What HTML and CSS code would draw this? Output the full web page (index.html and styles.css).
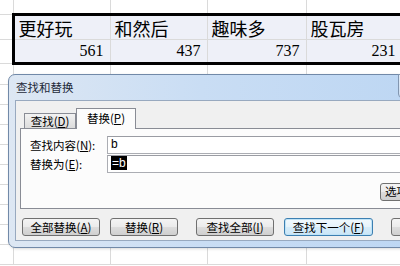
FILE: index.html
```html
<!DOCTYPE html>
<html lang="zh-CN">
<head>
<meta charset="UTF-8">
<title>查找和替换</title>
<link rel="stylesheet" href="styles.css">
</head>
<body>

<table class="sheet">
  <colgroup>
    <col class="c0"><col class="c1"><col class="c2"><col class="c3"><col class="c4">
  </colgroup>
  <tr class="r-top"><td></td><td></td><td></td><td></td><td></td></tr>
  <tr class="r-head">
    <td></td>
    <td class="hd first">更好玩</td>
    <td class="hd">和然后</td>
    <td class="hd">趣味多</td>
    <td class="hd">股瓦房</td>
  </tr>
  <tr class="r-num">
    <td></td>
    <td class="num first">561</td>
    <td class="num">437</td>
    <td class="num">737</td>
    <td class="num">231</td>
  </tr>
  <tr><td></td><td></td><td></td><td></td><td></td></tr>
  <tr><td></td><td></td><td></td><td></td><td></td></tr>
  <tr><td></td><td></td><td></td><td></td><td></td></tr>
  <tr><td></td><td></td><td></td><td></td><td></td></tr>
  <tr><td></td><td></td><td></td><td></td><td></td></tr>
  <tr><td></td><td></td><td></td><td></td><td></td></tr>
  <tr><td></td><td></td><td></td><td></td><td></td></tr>
  <tr><td></td><td></td><td></td><td></td><td></td></tr>
  <tr><td></td><td></td><td></td><td></td><td></td></tr>
  <tr><td></td><td></td><td></td><td></td><td></td></tr>
</table>

<div class="dialog">
  <div class="titlebar">查找和替换<span class="help"></span></div>
  <div class="client">
    <div class="tabs">
      <div class="tab">查找(<u>D</u>)</div>
      <div class="tab active">替换(<u>P</u>)</div>
    </div>
    <div class="panel">
      <div class="field">
        <label>查找内容(<u>N</u>):</label>
        <div class="input">b</div>
      </div>
      <div class="field">
        <label>替换为(<u>E</u>):</label>
        <div class="input"><span class="sel">=b</span></div>
      </div>
      <div class="options">
        <button class="btn">选项(<u>T</u>) &gt;&gt;</button>
      </div>
    </div>
    <div class="actions">
      <button class="btn w78">全部替换(<u>A</u>)</button>
      <button class="btn w68">替换(<u>R</u>)</button>
      <button class="btn w78 wide-gap">查找全部(<u>I</u>)</button>
      <button class="btn w89 focus">查找下一个(<u>F</u>)</button>
      <button class="btn w78 wide-gap">关闭</button>
    </div>
  </div>
</div>

</body>
</html>
```

FILE: styles.css
```css
html, body {
  margin: 0;
  width: 400px;
  height: 266px;
  overflow: hidden;
  background: #fff;
}
body {
  position: relative;
  font-family: "Noto Sans CJK SC", sans-serif;
  color: #000;
}

/* worksheet */
.sheet {
  border-collapse: collapse;
  table-layout: fixed;
  width: 402px;
}
.c0 { width: 13px; }
.c1 { width: 97px; }
.c2 { width: 97px; }
.c3 { width: 99px; }
.c4 { width: 96px; }
.sheet td {
  border: 1px solid #dadada;
  padding: 0 7px;
  height: 19px;
  white-space: nowrap;
  overflow: hidden;
}
.sheet tr:first-child td {
  border-top: none;
}
.sheet td:first-child {
  border-left: none;
}
.sheet .r-top td {
  height: 13px;
}
.sheet .hd {
  height: 23px;
  border-top: 3px solid #000;
  background: #eef0f8;
  font-size: 18px;
  line-height: 22px;
  padding-left: 4px;
}
.sheet .num {
  height: 22px;
  border-bottom: 3px solid #000;
  background: #eef0f8;
  font-family: "Liberation Serif", serif;
  font-size: 16px;
  text-align: right;
  padding-right: 6px;
}
.sheet .first {
  border-left: 3px solid #000;
}

/* dialog */
.dialog {
  position: absolute;
  left: 8px;
  top: 74px;
  width: 430px;
  height: 174px;
  box-sizing: border-box;
  border: 1px solid #7189a8;
  border-radius: 7px 0 0 7px;
  padding: 0 0 6px 6px;
  background: linear-gradient(to right, #dde7f3, #c9ddf4 45%, #bcd6f3);
  box-shadow: 1px 1px 3px rgba(0, 0, 0, 0.15);
  font-size: 12px;
}
.titlebar {
  position: relative;
  height: 25px;
  line-height: 24px;
  padding-left: 1px;
  color: #1e2a3a;
  font-size: 11.5px;
}
.help {
  position: absolute;
  left: 383px;
  top: -1px;
  width: 40px;
  height: 22px;
  border: 1px solid #8296b0;
  border-radius: 0 0 0 4px;
  background: linear-gradient(#e3ecf7, #cbdcf0);
}
.client {
  height: 141px;
  box-sizing: border-box;
  border: 1px solid #98a9bf;
  background: #f0f0f0;
  padding: 7px 0 0 4px;
}

.tabs {
  display: flex;
  align-items: flex-end;
  height: 20px;
  padding-left: 4px;
}
.tab {
  width: 52px;
  height: 15px;
  box-sizing: border-box;
  border: 1px solid #898c95;
  border-bottom: none;
  background: linear-gradient(#f2f2f2, #dcdcdc);
  line-height: 14px;
  text-align: center;
  font-size: 11.5px;
}
.tab.active {
  width: 60px;
  height: 21px;
  margin-bottom: -1px;
  background: #fcfcfc;
  line-height: 19px;
  position: relative;
  z-index: 1;
}

.panel {
  height: 81px;
  box-sizing: border-box;
  border: 1px solid #898c95;
  border-right: none;
  background: #fcfcfc;
  padding: 7px 0 0 9px;
}
.field {
  display: flex;
  align-items: center;
  height: 18px;
  margin-bottom: 1px;
}
.field label {
  width: 77px;
  flex: none;
  font-size: 11.5px;
  line-height: 16px;
}
.input {
  flex: 1;
  height: 18px;
  box-sizing: border-box;
  border: 1px solid #abadb3;
  border-top-color: #9a9ca3;
  background: #fff;
  padding-left: 3px;
  line-height: 15px;
  font-family: "Liberation Sans", sans-serif;
  font-size: 12px;
}
.sel {
  background: #000;
  color: #fff;
  padding: 0 1px;
}
.options {
  padding: 8px 0 0 350px;
}

.btn {
  height: 18px;
  box-sizing: border-box;
  border: 1px solid #707070;
  border-radius: 3px;
  background: linear-gradient(#f4f4f4 0%, #ebebeb 50%, #dddddd 51%, #cfcfcf 100%);
  font-family: "Noto Sans CJK SC", sans-serif;
  font-size: 11.5px;
  line-height: 15px;
  padding: 0;
  color: #000;
  white-space: nowrap;
}
.options .btn {
  width: 70px;
  text-align: left;
  padding-left: 4px;
}
.actions {
  display: flex;
  gap: 10px;
  padding: 9px 0 0 2px;
}
.w78 { width: 78px; flex: none; }
.w68 { width: 68px; flex: none; }
.w89 { width: 89px; flex: none; }
.wide-gap { margin-left: 8px; }
.btn.focus {
  border-color: #3c7fb1;
  background: linear-gradient(#f2f9fd 0%, #e6f3fb 50%, #d6ecf9 51%, #cbe6f7 100%);
  box-shadow: inset 0 0 0 1px #bfe3f7;
}
```
